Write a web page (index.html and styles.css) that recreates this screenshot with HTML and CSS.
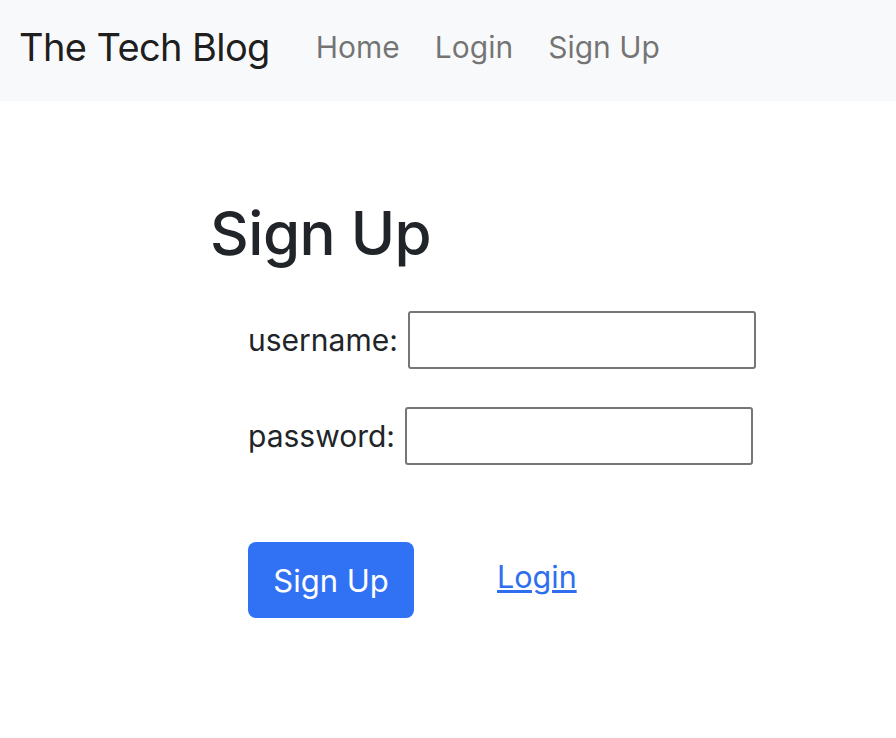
FILE: index.html
```html
<!DOCTYPE html>
<html lang="en">
<head>
<meta charset="utf-8">
<title>The Tech Blog</title>
<link rel="stylesheet" href="styles.css">
</head>
<body>
<nav class="navbar">
  <a class="brand" href="#">The Tech Blog</a>
  <ul class="nav-links">
    <li><a href="#">Home</a></li>
    <li><a href="#">Login</a></li>
    <li><a href="#">Sign Up</a></li>
  </ul>
</nav>
<main class="content">
  <h1 class="title">Sign Up</h1>
  <form class="signup-form">
    <div class="field">
      <label for="username">username:</label>
      <input id="username" class="input input-user" type="text">
    </div>
    <div class="field">
      <label for="password">password:</label>
      <input id="password" class="input" type="password">
    </div>
    <div class="actions">
      <button type="button" class="btn">Sign Up</button>
      <a class="link" href="#">Login</a>
    </div>
  </form>
</main>
</body>
</html>
```
FILE: styles.css
```css
* { box-sizing: border-box; }
body {
  margin: 0;
  font-family: Inter, "Liberation Sans", sans-serif;
  color: #212529;
  background: #fff;
}
.navbar {
  height: 101px;
  background: #f8f9fa;
  display: flex;
  align-items: center;
  padding-left: 19px;
  padding-bottom: 7px;
}
.brand {
  font-size: 38px;
  color: rgba(0,0,0,.9);
  text-decoration: none;
  letter-spacing: -0.6px;
  margin-right: 46px;
}
.nav-links {
  list-style: none;
  margin: 0;
  padding: 0;
  display: flex;
  gap: 35px;
}
.nav-links a {
  font-size: 30px;
  color: rgba(0,0,0,.55);
  text-decoration: none;
  letter-spacing: 0;
}
.content {
  padding-left: 210px;
  padding-top: 96px;
}
.title {
  margin: 0;
  font-size: 60px;
  font-weight: 500;
  line-height: 1.2;
  letter-spacing: -0.5px;
}
.signup-form {
  padding-left: 38px;
  margin-top: 42px;
}
.field {
  display: flex;
  align-items: center;
  gap: 10px;
  margin-bottom: 38px;
  font-size: 30px;
}
.input {
  width: 348px;
  height: 58px;
  border: 2px solid #767676;
  border-radius: 3px;
  font-size: 30px;
  background: #fff;
}
.actions {
  display: flex;
  align-items: center;
  gap: 83px;
  margin-top: 77px;
}
.btn {
  width: 166px;
  height: 76px;
  border: none;
  border-radius: 8px;
  background: #3172f5;
  color: #fff;
  font-family: inherit;
  font-size: 31px;
}
.link {
  font-size: 30.5px;
  color: #2f6fef;
  margin-top: -8px;
}
```
